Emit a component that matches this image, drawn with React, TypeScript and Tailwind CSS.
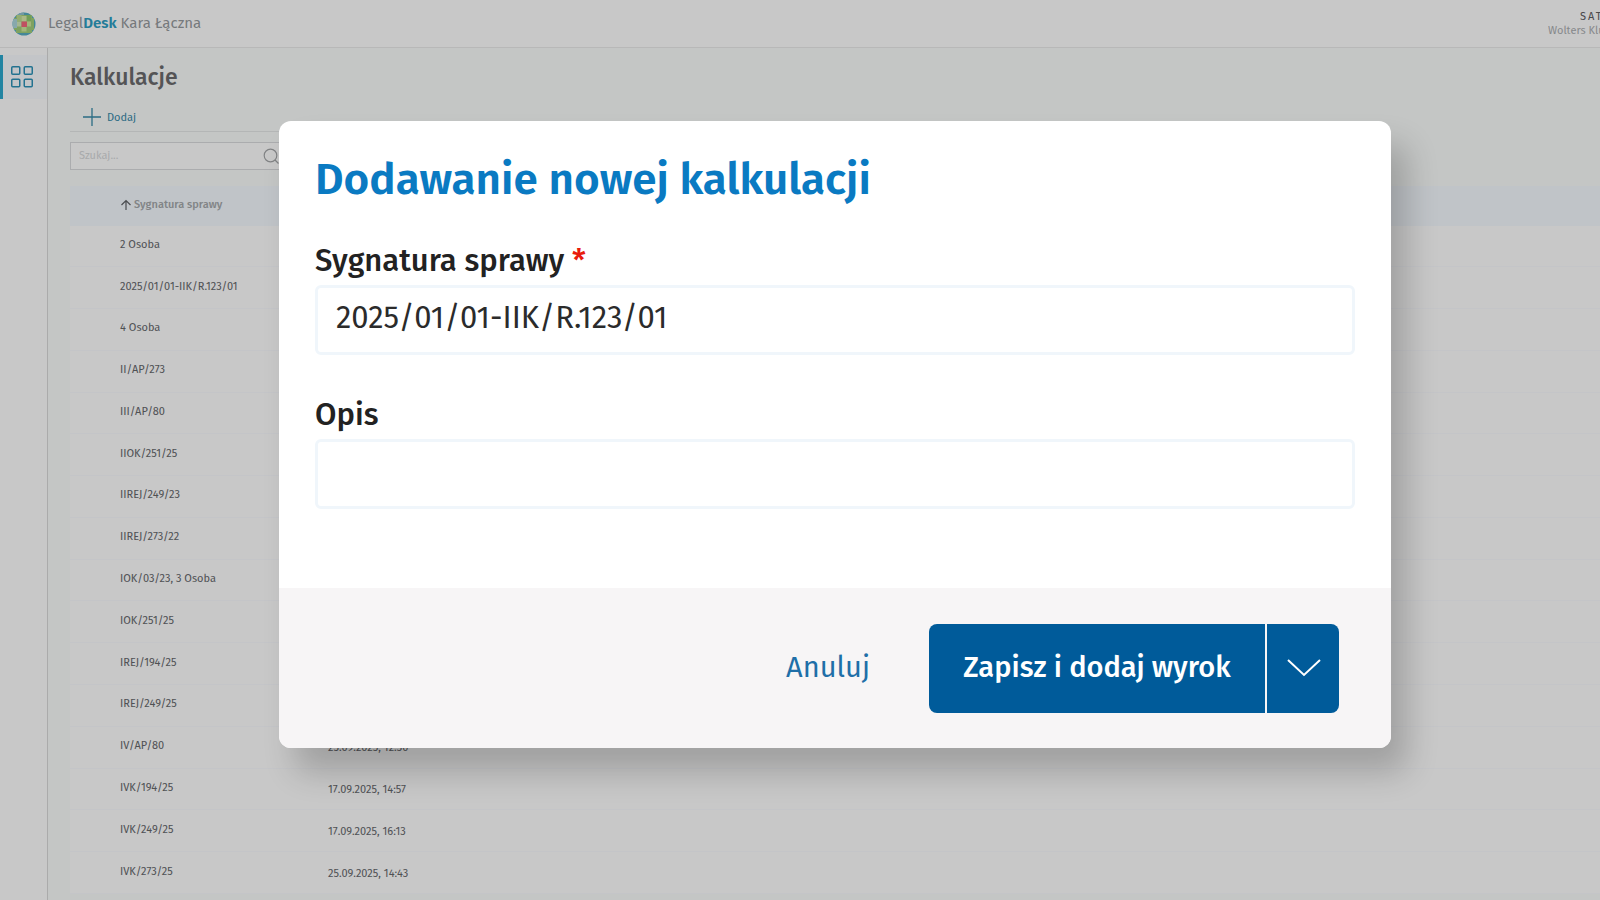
import { useState } from "react";

type Row = { id: string; date?: string };

const rows: Row[] = [
  { id: "2 Osoba" },
  { id: "2025/01/01-IIK/R.123/01" },
  { id: "4 Osoba" },
  { id: "II/AP/273" },
  { id: "III/AP/80" },
  { id: "IIOK/251/25" },
  { id: "IIREJ/249/23" },
  { id: "IIREJ/273/22" },
  { id: "IOK/03/23, 3 Osoba" },
  { id: "IOK/251/25" },
  { id: "IREJ/194/25" },
  { id: "IREJ/249/25" },
  { id: "IV/AP/80", date: "25.09.2025, 12:30" },
  { id: "IVK/194/25", date: "17.09.2025, 14:57" },
  { id: "IVK/249/25", date: "17.09.2025, 16:13" },
  { id: "IVK/273/25", date: "25.09.2025, 14:43" },
];

function Logo() {
  return (
    <svg viewBox="0 0 24 24" className="size-6" aria-hidden="true">
      <defs>
        <clipPath id="globe">
          <circle cx="12" cy="12" r="11.5" />
        </clipPath>
      </defs>
      <g clipPath="url(#globe)">
        <rect width="24" height="24" fill="#55a9bf" />
        <rect x="4" y="3" width="16" height="18" fill="#9fcb78" />
        <rect x="2" y="6" width="20" height="12" fill="#9fcb78" />
        <rect x="6" y="0" width="6" height="3" fill="#8fc0cb" />
        <rect x="5" y="3" width="4.500" height="6" fill="#b9d98f" />
        <rect x="14.500" y="3" width="4.500" height="6" fill="#8fc66c" />
        <rect x="0.5" y="7" width="4.500" height="9" fill="#a9d3d8" />
        <rect x="5" y="9.500" width="4.500" height="5" fill="#cfe4b8" />
        <rect x="14.500" y="9.500" width="4.500" height="5" fill="#cbe39a" />
        <rect x="9.500" y="4" width="5" height="5.500" fill="#d5e6a8" />
        <rect x="9.500" y="14.500" width="5" height="5" fill="#cbe39a" />
        <rect x="9.500" y="9.500" width="5.500" height="5.500" fill="#f0647a" />
      </g>
    </svg>
  );
}

function GridIcon() {
  return (
    <svg viewBox="0 0 24 24" className="size-6" fill="none" stroke="#2c8fb5" strokeWidth="1.5" aria-hidden="true">
      <rect x="1.75" y="1.75" width="8" height="7.5" rx="1" />
      <rect x="14.25" y="1.75" width="8" height="7.5" rx="1" />
      <rect x="1.75" y="14.25" width="8" height="7.5" rx="1" />
      <rect x="14.25" y="14.25" width="8" height="7.5" rx="1" />
    </svg>
  );
}

function TopBar() {
  return (
    <header className="flex h-12 shrink-0 items-center border-b border-[#e6e6e6] bg-[#fbfbfb] pl-3">
      <Logo />
      <p className="ml-3 flex-1 pb-[2px] text-[15px] leading-5 text-[#94989c]">
        Legal<b className="font-semibold text-[#2e9cc0]">Desk</b> Kara Łączna
      </p>
      <div className="w-[52px] overflow-hidden whitespace-nowrap text-[11px] leading-[14px]">
        <p className="pl-8 tracking-[2px] text-[#5c5c60]">SATURN</p>
        <p className="text-[#a8abae]">Wolters Kluwer</p>
      </div>
    </header>
  );
}

function SideBar() {
  return (
    <nav className="w-12 shrink-0 border-r border-[#d6d6d6] bg-[#fbfbfb] pt-[7px]">
      <a
        href="#kalkulacje"
        aria-label="Kalkulacje"
        className="flex h-11 items-center border-l-[3px] border-[#2ba5cb] bg-[#f4f7fa] pl-[7px]"
      >
        <GridIcon />
      </a>
    </nav>
  );
}

function Calculations() {
  return (
    <main className="min-w-0 flex-1 bg-[#f5f8f7] pl-[22px]">
      <h1 className="pt-[13px] text-[23px] leading-8 font-medium text-[#6a6a6c]">Kalkulacje</h1>
      <div className="mt-[9px] flex h-[30px] w-3/4 items-center border-b border-[#e2e4e4] pl-3">
        <button type="button" className="flex items-center gap-[5px] text-[11px] text-[#3787a6]">
          <svg viewBox="0 0 20 20" className="size-5" stroke="currentColor" strokeWidth="1.3" aria-hidden="true">
            <path d="M10 1V19M1 10H19" />
          </svg>
          <span className="pt-[3px]">Dodaj</span>
        </button>
      </div>
      <div className="mt-[10px] flex h-7 w-[218px] items-center border border-[#d6d8da] bg-[#fbfbfb] px-2">
        <input
          type="search"
          aria-label="Szukaj"
          placeholder="Szukaj..."
          className="min-w-0 flex-1 bg-transparent text-[11px] outline-none placeholder:text-[#d3d5d7]"
        />
        <svg viewBox="0 0 16 16" className="size-4" fill="none" stroke="#a2a4a6" strokeWidth="1.2" aria-hidden="true">
          <circle cx="7.500" cy="7.500" r="6.300" />
          <path d="M12 12L15.500 15.500" />
        </svg>
      </div>
      <table className="mt-4 h-[708px] w-full table-fixed text-left text-[11px] leading-4 text-[#64666a]">
        <colgroup>
          <col className="w-[258px]" />
          <col />
        </colgroup>
        <thead>
          <tr className="h-10 bg-[#f0f5fa]">
            <th className="pb-[2px] pl-[50px] font-medium text-[#a2a5a8]">
              <span className="flex items-center gap-[2px]">
                <svg viewBox="0 0 12 12" className="size-3" fill="none" stroke="#5e6064" strokeWidth="1.2" aria-hidden="true">
                  <path d="M6 11V1.500M1.500 6L6 1.500L10.500 6" />
                </svg>
                Sygnatura sprawy
              </span>
            </th>
            <th />
          </tr>
        </thead>
        <tbody>
          {rows.map((row) => (
            <tr key={row.id} className="border-b border-[#f6f7fb] bg-[#fafafa]">
              <td className="pb-[2px] pl-[50px]">{row.id}</td>
              <td className="pt-[2px]">{row.date}</td>
            </tr>
          ))}
        </tbody>
      </table>
    </main>
  );
}

function Dialog() {
  const [signature, setSignature] = useState("2025/01/01-IIK/R.123/01");
  const [description, setDescription] = useState("");
  const label = "block text-[31px] leading-10 font-medium text-[#222]";
  const field =
    "mt-1 block h-[70px] w-full rounded-md border-[3px] border-[#f0f6fb] bg-white px-[18px] pb-[6px] text-[31px] leading-10 text-[#2b2b2b] outline-none";

  return (
    <form
      role="dialog"
      aria-labelledby="dialog-title"
      className="w-full overflow-hidden rounded-xl bg-white shadow-[16px_24px_32px_rgba(0,0,0,0.2)]"
      onSubmit={(event) => event.preventDefault()}
    >
      <div className="px-9 pt-7 pb-[79px]">
        <h2 id="dialog-title" className="text-[44px] leading-[62px] font-semibold text-[#0a7ac2]">
          Dodawanie nowej kalkulacji
        </h2>
        <div className="mt-[30px]">
          <label htmlFor="signature" className={label}>
            Sygnatura sprawy <span className="text-[#e81c0c]">*</span>
          </label>
          <input id="signature" className={field} value={signature} onChange={(e) => setSignature(e.target.value)} />
        </div>
        <div className="mt-10">
          <label htmlFor="description" className={label}>
            Opis
          </label>
          <input id="description" className={field} value={description} onChange={(e) => setDescription(e.target.value)} />
        </div>
      </div>
      <div className="flex h-40 items-center justify-end bg-[#f7f5f6] pr-[52px]">
        <button type="button" className="mr-[59px] text-[29px] leading-10 text-[#1f6fa8]">
          Anuluj
        </button>
        <div className="flex h-[89px] gap-[2px] overflow-hidden rounded-lg text-white">
          <button type="submit" className="w-[336px] bg-[#005b9a] text-[29px] leading-10 font-medium">
            Zapisz i dodaj wyrok
          </button>
          <button type="button" aria-label="Więcej opcji" className="flex w-[72px] items-center justify-center bg-[#005b9a]">
            <svg viewBox="0 0 36 20" className="h-5 w-9" fill="none" stroke="currentColor" strokeWidth="2" aria-hidden="true">
              <path d="M3 2L19 17L35 2" />
            </svg>
          </button>
        </div>
      </div>
    </form>
  );
}

export default function App() {
  return (
    <div className="relative flex h-screen flex-col overflow-hidden font-['Fira_Sans','Roboto',sans-serif]">
      <TopBar />
      <div className="flex min-h-0 flex-1">
        <SideBar />
        <Calculations />
      </div>
      <div className="absolute inset-0 bg-black/20 pt-[121px] pr-[209px] pl-[279px]">
        <Dialog />
      </div>
    </div>
  );
}
